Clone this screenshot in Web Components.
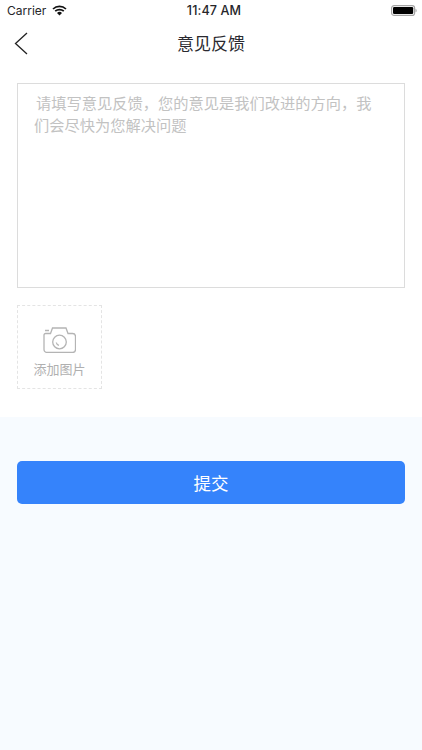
<!DOCTYPE html>
<html lang="zh">
<head>
<meta charset="utf-8">
<title>意见反馈</title>
<style>
  html, body { margin: 0; height: 100%; }
  body { font-family: "Liberation Sans", "Noto Sans CJK SC", sans-serif; background: #f7fbff; }
  feedback-page { height: 750px; }
</style>
</head>
<body>
<feedback-page>
  <status-bar slot="top"></status-bar>
  <nav-bar slot="top">意见反馈</nav-bar>
  <feedback-box slot="form">请填写意见反馈，您的意见是我们改进的方向，我们会尽快为您解决问题</feedback-box>
  <photo-add slot="form">添加图片</photo-add>
  <submit-button slot="bottom">提交</submit-button>
</feedback-page>

<script>
  class FeedbackPage extends HTMLElement {
    connectedCallback() {
      if (this.shadowRoot) return;
      this.attachShadow({ mode: "open" });
      this.shadowRoot.innerHTML = `
        <style>
          :host { display: flex; flex-direction: column; }
          .white { background: #fff; height: 417px; display: flex; flex-direction: column; }
          .form { padding: 18px 17px 0; display: flex; flex-direction: column; gap: 17px; }
          .bottom { flex: 1; padding: 44px 17px 0; background: #f7fbff; }
        </style>
        <div class="white">
          <slot name="top"></slot>
          <div class="form"><slot name="form"></slot></div>
        </div>
        <div class="bottom"><slot name="bottom"></slot></div>
      `;
    }
  }

  class StatusBar extends HTMLElement {
    connectedCallback() {
      if (this.shadowRoot) return;
      this.attachShadow({ mode: "open" });
      this.shadowRoot.innerHTML = `
        <style>
          :host { display: grid; grid-template-columns: 1fr auto 1fr; align-items: center; height: 21px; padding: 0 5px 0 7px; color: #26262a;
                  font: 12px/21px Inter, "Liberation Sans", sans-serif; }
          .left { display: flex; align-items: center; gap: 6px; }
          .time { font-size: 12.600px; font-weight: 500; letter-spacing: .1px; padding-left: 4px; }
          .right { display: flex; justify-content: flex-end; }
          svg { display: block; }
        </style>
        <div class="left">Carrier
          <svg width="15" height="11" viewBox="0 0 15 11">
            <path d="M1 4a9.500 9.500 0 0 1 13 0M3.200 6.200a6.400 6.400 0 0 1 8.600 0" fill="none" stroke="#111" stroke-width="1.700"/>
            <path d="M5 8a3.600 3.600 0 0 1 5 0L7.500 10.600z" fill="#111"/>
          </svg>
        </div>
        <div class="time">11:47 AM</div>
        <div class="right">
          <svg width="26" height="11" viewBox="0 0 26 11">
            <rect x=".6" y=".6" width="23" height="9.800" rx="2.500" fill="none" stroke="#a5a5a5" stroke-width="1.200"/>
            <rect x="2" y="2" width="20.200" height="7" rx="1.200" fill="#000"/>
            <path d="M24.500 3.700c.8.200 1.200.9 1.200 1.800s-.4 1.600-1.200 1.800z" fill="#aaa"/>
          </svg>
        </div>
      `;
    }
  }

  class NavBar extends HTMLElement {
    connectedCallback() {
      if (this.shadowRoot) return;
      this.attachShadow({ mode: "open" });
      this.shadowRoot.innerHTML = `
        <style>
          :host { display: flex; align-items: center; justify-content: center; position: relative; height: 44px; color: #2a2a30;
                  font: 17px/44px "Noto Sans CJK SC", sans-serif; }
          svg { position: absolute; left: 14px; top: 11px; }
        </style>
        <svg width="14" height="23" viewBox="0 0 14 23"><path d="M13 1 1.500 11.500 13 22" fill="none" stroke="#222" stroke-width="1.300"/></svg>
        <slot></slot>
      `;
    }
  }

  class FeedbackBox extends HTMLElement {
    connectedCallback() {
      if (this.shadowRoot) return;
      this.attachShadow({ mode: "open" });
      this.shadowRoot.innerHTML = `
        <style>
          :host { display: block; box-sizing: border-box; height: 205px; border: 1px solid #dcdcdc; padding: 7px 32px 0 16px; color: #c2c2c2;
                  font: 15.250px/22px "Noto Sans CJK SC", sans-serif; }
          .first { display: inline-block; width: 2px; }
        </style>
        <span class="first"></span><slot></slot>
      `;
    }
  }

  class PhotoAdd extends HTMLElement {
    connectedCallback() {
      if (this.shadowRoot) return;
      this.attachShadow({ mode: "open" });
      this.shadowRoot.innerHTML = `
        <style>
          :host { display: flex; flex-direction: column; align-items: center; box-sizing: border-box; width: 85px; height: 84px; padding-top: 21px;
                  border: 1px dashed #e4e4e4; color: #b0b0b0; font: 13px/18px "Noto Sans CJK SC", sans-serif; }
          svg { display: block; margin-bottom: 7px; }
        </style>
        <svg width="33" height="26" viewBox="0 0 33 26" fill="none" stroke="#b4b4b4" stroke-width="1.300">
          <path d="M2.500 6.500H7.500l2-5.500h13.500l2 5.500h4.500a3 3 0 0 1 3 3V22.500a3 3 0 0 1-3 3H4a3 3 0 0 1-3-3V8a1.500 1.500 0 0 1 1.500-1.500z"/>
          <circle cx="16.500" cy="15" r="6.800"/>
          <path d="M13.300 15.500a3.500 3.500 0 0 0 2.700 2.800"/>
          <path d="M2 3.500h4" stroke-width="1.500"/>
        </svg>
        <slot></slot>
      `;
    }
  }

  class SubmitButton extends HTMLElement {
    connectedCallback() {
      if (this.shadowRoot) return;
      this.attachShadow({ mode: "open" });
      this.shadowRoot.innerHTML = `
        <style>
          :host { display: flex; align-items: center; justify-content: center; height: 43px; border-radius: 5px; background: #3583fb; color: #fff;
                  font: 17.500px/41px "Noto Sans CJK SC", sans-serif; }
        </style>
        <slot></slot>
      `;
    }
  }

  customElements.define("feedback-page", FeedbackPage);
  customElements.define("status-bar", StatusBar);
  customElements.define("nav-bar", NavBar);
  customElements.define("feedback-box", FeedbackBox);
  customElements.define("photo-add", PhotoAdd);
  customElements.define("submit-button", SubmitButton);
</script>
</body>
</html>
